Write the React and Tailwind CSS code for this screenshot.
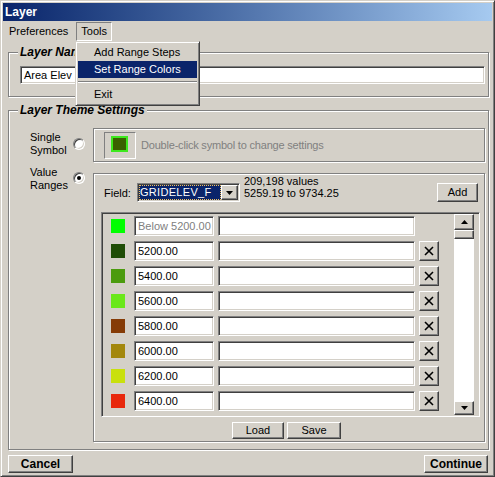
import React from "react";

const F = "font-['Liberation_Sans',Arial,sans-serif]";
const raised =
  "bg-[#d4d0c8] border border-t-white border-l-white border-r-[#404040] border-b-[#404040] shadow-[inset_-1px_-1px_0_#808080]";
const sunken =
  "bg-white border border-t-[#808080] border-l-[#808080] border-r-white border-b-white shadow-[inset_1px_1px_0_#404040,inset_-1px_-1px_0_#d4d0c8]";
const etched = "border border-[#808080] shadow-[inset_1px_1px_0_#fff,1px_1px_0_#fff]";

const rows = [
  { c: "bg-[#00ff00]", v: "Below 5200.00", first: true },
  { c: "bg-[#1f4d06]", v: "5200.00" },
  { c: "bg-[#4b9b0e]", v: "5400.00" },
  { c: "bg-[#6ae81a]", v: "5600.00" },
  { c: "bg-[#853b06]", v: "5800.00" },
  { c: "bg-[#a3870c]", v: "6000.00" },
  { c: "bg-[#c9e00c]", v: "6200.00" },
  { c: "bg-[#e8280c]", v: "6400.00" },
  { c: "bg-[#d4d0c8]", v: "" },
];

function Radio({ checked }) {
  return (
    <div className="w-[12px] h-[12px] rounded-full bg-white border border-t-[#808080] border-l-[#808080] border-r-white border-b-white shadow-[inset_1px_1px_0_#404040,inset_-1px_-1px_0_#d4d0c8] flex items-center justify-center shrink-0">
      {checked && <div className="w-[4px] h-[4px] rounded-full bg-black" />}
    </div>
  );
}

function XIcon() {
  return (
    <svg width="10" height="10" viewBox="0 0 10 10">
      <path d="M1 1 L9 9 M9 1 L1 9" stroke="#000" strokeWidth="1.6" fill="none" />
    </svg>
  );
}

function Tri({ up }) {
  return (
    <svg width="7" height="4" viewBox="0 0 7 4">
      {up ? <path d="M3.5 0 L7 4 L0 4 Z" fill="#000" /> : <path d="M0 0 L7 0 L3.5 4 Z" fill="#000" />}
    </svg>
  );
}

export default function App() {
  return (
    <div
      className={`w-[495px] h-[477px] bg-[#d4d0c8] border border-t-[#d4d0c8] border-l-[#d4d0c8] border-r-[#404040] border-b-[#404040] shadow-[inset_1px_1px_0_#fff,inset_-1px_-1px_0_#808080] p-[2px] flex flex-col relative text-[11px] leading-[13px] text-black overflow-hidden ${F}`}
    >
      {/* Title bar */}
      <div className="h-[18px] shrink-0 bg-gradient-to-r from-[#0a246a] to-[#a6caf0] flex items-center pl-[2px] text-white font-bold text-[12px]">
        Layer
      </div>

      {/* Menu bar */}
      <div className="h-[20px] shrink-0 flex items-end">
        <div className="px-[6px] h-[19px] flex items-center">Preferences</div>
        <div className="ml-[2px] px-[4px] h-[19px] flex items-center border border-t-[#808080] border-l-[#808080] border-r-white border-b-white">
          Tools
        </div>
      </div>

      {/* Layer Name group */}
      <div className={`relative mt-[11px] ml-[5px] mr-[3px] h-[45px] shrink-0 ${etched} pt-[13px] pl-[11px] pr-[3px]`}>
        <span className="absolute left-[9px] top-[-8px] px-[2px] bg-[#d4d0c8] font-bold italic text-[12px] leading-[14px]">
          Layer Name
        </span>
        <div className={`h-[18px] ${sunken} flex items-center pl-[3px]`}>Area Elev</div>
      </div>

      {/* Layer Theme Settings group */}
      <div className={`relative mt-[13px] ml-[5px] mr-[3px] shrink-0 ${etched} pt-[17px] pb-[7px] pr-[3px]`}>
        <span className="absolute left-[9px] top-[-8px] px-[2px] bg-[#d4d0c8] font-bold italic text-[12px] leading-[14px]">
          Layer Theme Settings
        </span>

        {/* Single symbol row */}
        <div className="flex items-center pl-[21px]">
          <div className="w-[43px] leading-[13px] mt-[-2px]">
            Single
            <br />
            Symbol
          </div>
          <div className="mt-[-2px]">
            <Radio />
          </div>
          <div className={`ml-[8px] flex-1 h-[34px] ${etched} flex items-center pl-[10px]`}>
            <div className="w-[32px] h-[27px] border border-t-[#808080] border-l-[#808080] border-r-white border-b-white flex items-center justify-center">
              <div className="w-[17px] h-[16px] bg-[#3a6000] border-2 border-[#3ee81e] mt-[-3px] mr-[1px]" />
            </div>
            <div className="ml-[5px] text-[#808080] tracking-[-0.2px]">Double-click symbol to change settings</div>
          </div>
        </div>

        {/* Value ranges row */}
        <div className="flex items-start pl-[21px] mt-[11px]">
          <div className="w-[43px] leading-[13px] mt-[-7px]">
            Value
            <br />
            Ranges
          </div>
          <div className="mt-[-1px]">
            <Radio checked />
          </div>
          <div className={`ml-[8px] flex-1 ${etched} flex flex-col`}>
            {/* header */}
            <div className="flex items-start pt-[1px] pl-[10px] pr-[6px]">
              <div className="mt-[12px] leading-[12px] w-[33px]">Field:</div>
              <div className={`mt-[8px] w-[103px] h-[19px] ${sunken} flex items-center pl-[1px] pr-[1px]`}>
                <div className="flex-1 h-[15px] bg-[#0a246a] text-white text-[11px] tracking-[0.3px] leading-[15px] pl-[1px] outline outline-1 outline-dotted outline-[#f0c060] -outline-offset-1 overflow-hidden whitespace-nowrap">
                  GRIDELEV_F
                </div>
                <div className={`w-[17px] h-[15px] ${raised} flex items-center justify-center`}>
                  <Tri />
                </div>
              </div>
              <div className="ml-[4px] leading-[12px]">
                209,198 values
                <br />
                5259.19 to 9734.25
              </div>
              <div className={`ml-auto mt-[8px] w-[41px] h-[19px] ${raised} flex items-center justify-center`}>Add</div>
            </div>

            {/* List frame */}
            <div className="ml-[7px] mr-[4px] mt-[10px] h-[205px] border border-t-[#808080] border-l-[#808080] border-r-white border-b-white shadow-[inset_1px_1px_0_#404040,inset_-1px_-1px_0_#d4d0c8] flex overflow-hidden">
              <div className="flex-1 flex flex-col gap-[5px] pt-[3px] pl-[9px] overflow-hidden">
                {rows.map((r, i) => (
                  <div key={i} className="flex items-center h-[20px] shrink-0">
                    <div className={`w-[14px] h-[14px] ${r.c}`} />
                    <div
                      className={`ml-[9px] w-[80px] h-[20px] ${sunken} flex items-center pl-[3px] ${
                        r.first ? "text-[#808080]" : "text-black"
                      }`}
                    >
                      {r.v}
                    </div>
                    <div className={`ml-[4px] w-[197px] h-[20px] ${sunken}`} />
                    {!r.first && (
                      <div className={`ml-[4px] w-[20px] h-[20px] ${raised} flex items-center justify-center`}>
                        <XIcon />
                      </div>
                    )}
                  </div>
                ))}
              </div>
              {/* scrollbar */}
              <div className="w-[20px] mr-[5px] mt-[1px] mb-[1px] flex flex-col bg-white">
                <div className={`h-[16px] shrink-0 ${raised} flex items-center justify-center`}>
                  <Tri up />
                </div>
                <div className={`h-[9px] shrink-0 ${raised}`} />
                <div className="flex-1 bg-white" />
                <div className={`h-[14px] shrink-0 ${raised} flex items-center justify-center`}>
                  <Tri />
                </div>
              </div>
            </div>

            {/* Load / Save */}
            <div className="flex justify-center gap-[3px] mt-[5px] mb-[2px] pr-[5px]">
              <div className={`w-[52px] h-[17px] ${raised} flex items-center justify-center`}>Load</div>
              <div className={`w-[54px] h-[17px] ${raised} flex items-center justify-center`}>Save</div>
            </div>
          </div>
        </div>
      </div>

      {/* Bottom buttons */}
      <div className="flex justify-between mt-[5px] ml-[5px] mr-[4px]">
        <div className={`w-[65px] h-[18px] ${raised} flex items-center justify-center font-bold text-[12px]`}>Cancel</div>
        <div className={`w-[64px] h-[18px] ${raised} flex items-center justify-center font-bold text-[12px]`}>Continue</div>
      </div>

      {/* Dropdown menu */}
      <div className="absolute left-[74px] top-[40px] w-[125px] bg-[#d4d0c8] border border-t-[#d4d0c8] border-l-[#d4d0c8] border-r-[#404040] border-b-[#404040] shadow-[inset_1px_1px_0_#fff,inset_-1px_-1px_0_#808080] p-[1px] pt-[2px] pb-[2px]">
        <div className="h-[17px] flex items-center pl-[16px] ml-[1px] mr-[1px]">Add Range Steps</div>
        <div className="h-[17px] flex items-center pl-[16px] ml-[1px] mr-[1px] bg-[#0a246a] text-white">Set Range Colors</div>
        <div className="h-[8px] flex items-center mx-[1px]">
          <div className="w-full border-t border-t-[#808080] border-b border-b-white" />
        </div>
        <div className="h-[17px] flex items-center pl-[16px] ml-[1px] mr-[1px]">Exit</div>
      </div>
    </div>
  );
}
